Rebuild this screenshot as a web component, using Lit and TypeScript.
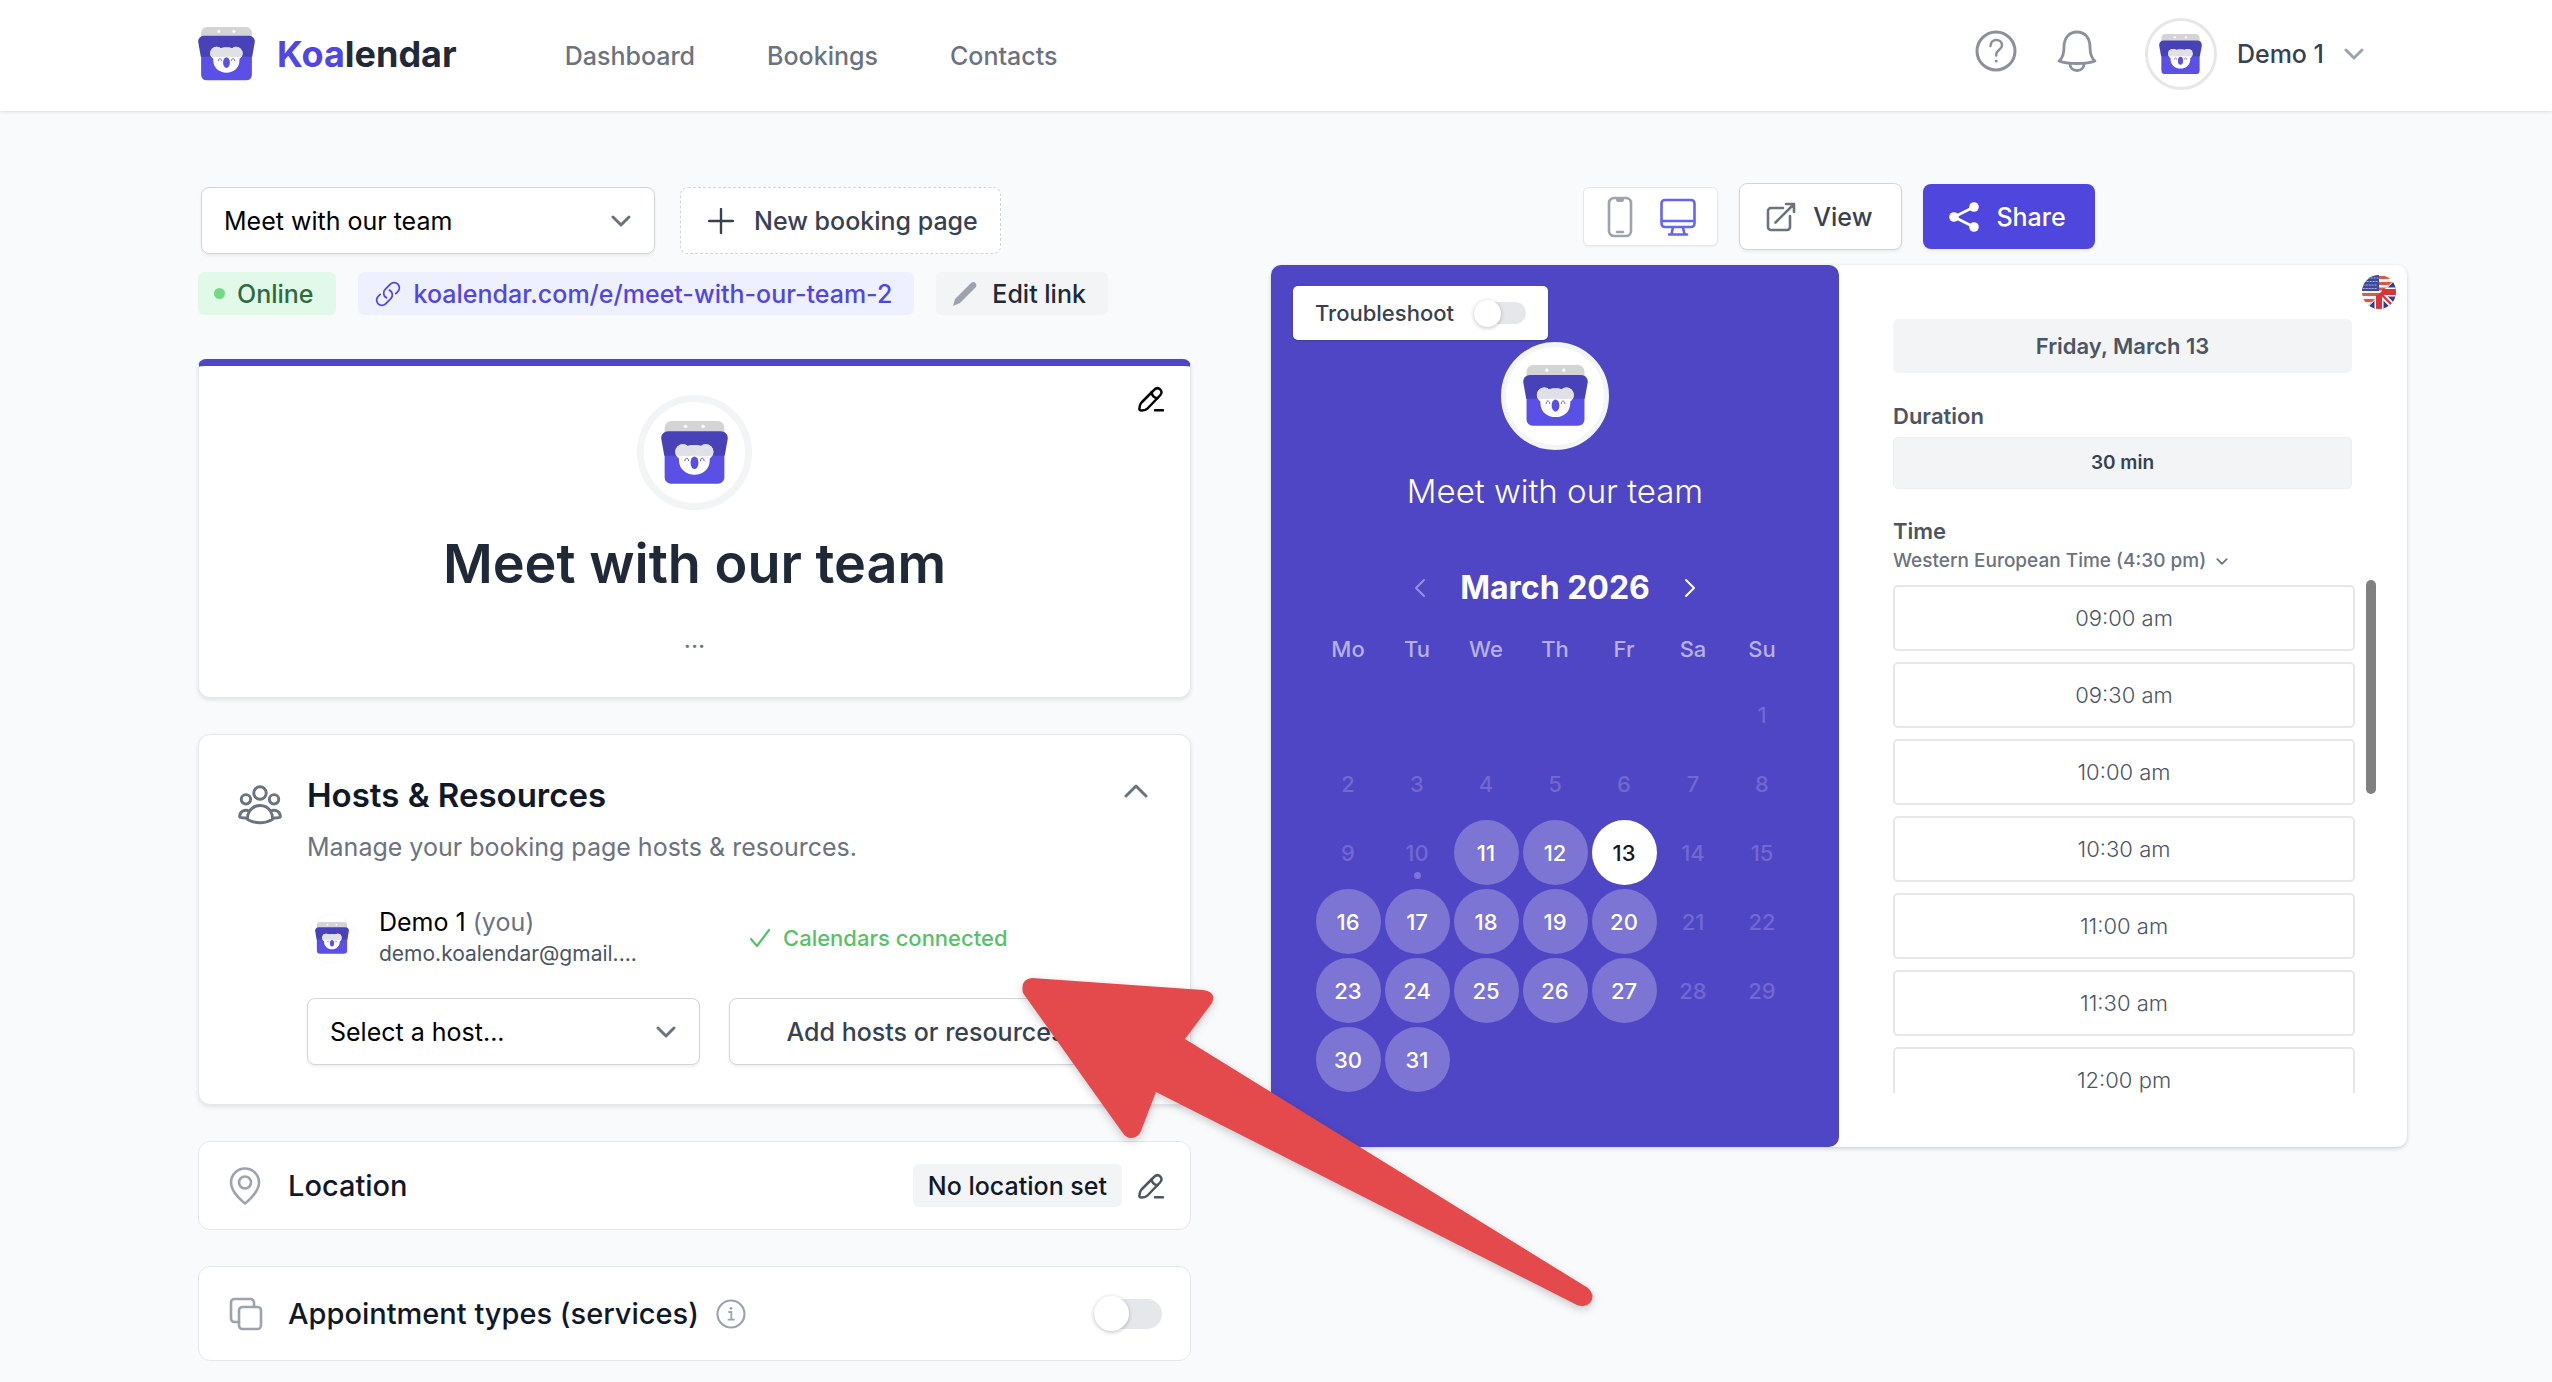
import { LitElement, html, css, svg, nothing } from "lit";
import { customElement, property, state } from "lit/decorators.js";
import { classMap } from "lit/directives/class-map.js";

/** Koala peeking out of a calendar pocket; scales with the width of its host. */
@customElement("koala-mark")
class KoalaMark extends LitElement {
  static styles = css`
    :host { display: block; }
    .mark { display: block; width: 100%; height: auto; }
  `;

  render() {
    return html`
      <svg class="mark" viewBox="0 0 202 190" aria-hidden="true">
        <defs>
          <clipPath id="upper"><rect x="0" y="60" width="202" height="45" /></clipPath>
        </defs>
        <rect x="11" y="0" width="180" height="60" rx="20" fill="#d4d4d4" />
        <circle cx="74" cy="16" r="5" fill="#fff" />
        <circle cx="127" cy="16" r="5" fill="#fff" />
        <path d="M11 90h180v80a19 19 0 0 1-19 19H30a19 19 0 0 1-19-19z" fill="#5a50e5" />
        <path d="M22 31h158c14 0 23 11 21 24l-9 50H10L1 55C-1 42 8 31 22 31z" fill="#4842b9" />
        <g fill="#fff">
          <circle cx="66" cy="93" r="23" />
          <circle cx="135" cy="93" r="23" />
          <path d="M54 96c0-15 24-23 47-23s46 8 46 23v21c0 29-21 45-46 45s-47-16-47-45z" />
        </g>
        <g fill="#dfe1e6" clip-path="url(#upper)">
          <circle cx="66" cy="93" r="23" />
          <circle cx="135" cy="93" r="23" />
          <path d="M54 96c0-15 24-23 47-23s46 8 46 23v21H54z" />
        </g>
        <ellipse cx="101" cy="126" rx="12" ry="19" fill="#5a50e5" />
        <path d="M72 121c0-12 11-12 11 0M119 121c0-12 11-12 11 0" fill="none" stroke="#5a50e5" stroke-width="3" />
      </svg>
    `;
  }
}

type IconName =
  | "help" | "bell" | "down" | "up" | "left" | "right" | "plus" | "link" | "pencil"
  | "edit" | "phone" | "monitor" | "open" | "share" | "people" | "check" | "pin"
  | "copy" | "info" | "flag";

const icons: Record<IconName, { box: string; width: number; body: unknown }> = {
  help: {
    box: "0 0 42 42", width: 42,
    body: svg`<circle cx="21" cy="21" r="19" stroke-width="3" />
      <path d="M15.500 16c0-3.500 2.500-6 5.800-6s5.700 2.200 5.700 5.200c0 4.300-5.800 4.700-5.800 9.300v1" stroke-width="2.500" />
      <circle cx="21.200" cy="31" r="1.500" fill="currentColor" stroke="none" />`,
  },
  bell: {
    box: "0 0 40 42", width: 40,
    body: svg`<path d="M2 31c4-3 5-7 5-14C7 8 12 2 20 2s13 6 13 15c0 7 1 11 5 14-5 2-11 2.500-18 2.500S7 33 2 31z" stroke-width="2.800" />
      <path d="M13 34c0 4 3 6.500 7 6.500s7-2.500 7-6.500" stroke-width="2.800" />`,
  },
  down: { box: "0 0 20 12", width: 20, body: svg`<path d="M2 2l8 8 8-8" stroke-width="3" />` },
  up: { box: "0 0 24 14", width: 24, body: svg`<path d="M2 12L12 2l10 10" stroke-width="3" />` },
  left: { box: "0 0 12 20", width: 12, body: svg`<path d="M10 2l-8 8 8 8" stroke-width="2" />` },
  right: { box: "0 0 12 20", width: 12, body: svg`<path d="M2 2l8 8-8 8" stroke-width="2" />` },
  plus: { box: "0 0 26 26", width: 26, body: svg`<path d="M13 1v24M1 13h24" stroke-width="2.400" />` },
  link: {
    box: "0 0 24 24", width: 32,
    body: svg`<path d="M13.190 8.688a4.500 4.500 0 0 1 1.242 7.244l-4.500 4.500a4.500 4.500 0 0 1-6.364-6.364l1.757-1.757m13.350-.622l1.757-1.757a4.500 4.500 0 0 0-6.364-6.364l-4.500 4.500a4.500 4.500 0 0 0 1.242 7.244" stroke-width="1.500" />`,
  },
  pencil: {
    box: "0 0 26 26", width: 26,
    body: svg`<path d="M1 25l2-7L19 2c3-3 7 1 4.500 4.500L8 22z" fill="currentColor" stroke="none" />`,
  },
  edit: {
    box: "0 0 26 26", width: 26,
    body: svg`<path d="M15.500 4.500c2-2.500 4-3.200 6.200-1.500 2.500 2 2.300 4.300.3 6.500L9.500 22.500c-1.500 1.500-3.500 2-6.500 2-1.500 0-1.800-1-1.500-3 .3-2.500.8-3.700 2-5z" stroke-width="2.500" />
      <path d="M13.500 6.500c.5 3 2.500 5.300 6 5.700M17 24.300h8" stroke-width="2.500" />`,
  },
  phone: {
    box: "0 0 26 42", width: 26,
    body: svg`<rect x="2" y="2" width="22" height="38" rx="5" stroke-width="2.600" />
      <path d="M9 2v2q0 2 2 2h4q2 0 2-2V2z" fill="currentColor" stroke="none" /><path d="M10 36h6" stroke-width="2.600" />`,
  },
  monitor: {
    box: "0 0 36 38", width: 36,
    body: svg`<rect x="1.500" y="2" width="33" height="27" rx="3.500" stroke-width="2.600" />
      <path d="M2 23h32M13 29.500l-1.500 6.500M23 29.500l1.500 6.500M9 36.500h18" stroke-width="2.600" />`,
  },
  open: {
    box: "0 0 30 30", width: 30,
    body: svg`<path d="M17 6H5a3 3 0 0 0-3 3v16a3 3 0 0 0 3 3h16a3 3 0 0 0 3-3V14M20 2h8v8M27.500 2.500L9.500 20.500" stroke-width="2.600" />`,
  },
  share: {
    box: "0 0 30 30", width: 30,
    body: svg`<path d="M25 5L5 15l20 10" stroke-width="2.600" />
      <g fill="currentColor" stroke="none"><circle cx="25" cy="5" r="4.800" /><circle cx="5" cy="15" r="4.800" /><circle cx="25" cy="25" r="4.800" /></g>`,
  },
  people: {
    box: "0 0 24 24", width: 50,
    body: svg`<path d="M18 18.720a9.094 9.094 0 0 0 3.741-.479 3 3 0 0 0-4.682-2.720m.940 3.198l.001.031c0 .225-.012.447-.037.666A11.944 11.944 0 0 1 12 21c-2.170 0-4.207-.576-5.963-1.584A6.062 6.062 0 0 1 6 18.719m12 0a5.971 5.971 0 0 0-.941-3.197m0 0A5.995 5.995 0 0 0 12 12.750a5.995 5.995 0 0 0-5.058 2.772m0 0a3 3 0 0 0-4.681 2.720 8.986 8.986 0 0 0 3.740.477m.940-3.197a5.971 5.971 0 0 0-.940 3.197M15 6.750a3 3 0 1 1-6 0 3 3 0 0 1 6 0zm6 3a2.250 2.250 0 1 1-4.500 0 2.250 2.250 0 0 1 4.500 0zm-13.500 0a2.250 2.250 0 1 1-4.500 0 2.250 2.250 0 0 1 4.500 0z" stroke-width="1.400" />`,
  },
  check: { box: "0 0 22 20", width: 22, body: svg`<path d="M2 11l6 7L20 2" stroke-width="2.200" />` },
  pin: {
    box: "0 0 32 38", width: 32,
    body: svg`<circle cx="16" cy="15.500" r="6" stroke-width="2.600" />
      <path d="M30 15.500C30 26 16 36.500 16 36.500S2 26 2 15.500a14 14 0 0 1 28 0z" stroke-width="2.600" />`,
  },
  copy: {
    box: "0 0 34 34", width: 34,
    body: svg`<rect x="10" y="10" width="22" height="22" rx="3.500" stroke-width="2.600" />
      <path d="M10 25H5.500A3.500 3.500 0 0 1 2 21.500v-16A3.500 3.500 0 0 1 5.500 2h16A3.500 3.500 0 0 1 25 5.500V10" stroke-width="2.600" />`,
  },
  info: {
    box: "0 0 30 30", width: 30,
    body: svg`<circle cx="15" cy="15" r="13.500" stroke-width="2.200" />
      <path d="M13 13h2.300v7.500M12.500 20.700h5.500" stroke-width="1.800" /><circle cx="15" cy="9.300" r="1.400" fill="currentColor" stroke="none" />`,
  },
  flag: {
    box: "0 0 34 34", width: 34,
    body: svg`<defs><clipPath id="disc"><circle cx="17" cy="17" r="17" /></clipPath><clipPath id="union"><path d="M34 3v31H3z" /></clipPath></defs>
      <g clip-path="url(#disc)" stroke="none">
        <path d="M0 0h34v34H0z" fill="#f6f2f2" />
        <path d="M0 1h34v3H0zM0 7h34v3H0zM0 12.500h34v3H0zM0 18h34v3H0zM0 24h34v3H0z" fill="#dc5a40" />
        <path d="M0 0h17v16H0z" fill="#3c4a9c" />
        <path d="M3 3h13M2 6.500h14M1 10h15M1 13.500h15" stroke="#a9b2dc" stroke-width="1.200" stroke-dasharray="1.200 1.800" />
        <g clip-path="url(#union)">
          <path d="M0 0h34v34H0z" fill="#2f3f8c" />
          <path d="M0 34L34 0M17 17l17 17" stroke="#fff" stroke-width="6" />
          <path d="M17 14v20M17 17h17" stroke="#fff" stroke-width="9" />
          <path d="M17 17L4 30M17 17l14 14" stroke="#d8343c" stroke-width="2.400" />
        </g>
        <path d="M17 20v14M20 17h14" stroke="#d8343c" stroke-width="6" stroke-linecap="butt" />
        <path d="M14 22l8-8h4v6h-6v4z" fill="#d8343c" />
      </g>`,
  },
};

@customElement("ui-icon")
class UiIcon extends LitElement {
  @property() name: IconName = "down";
  @property({ type: Number }) size = 0;

  static styles = css`
    :host { display: block; flex: none; }
    .icon { display: block; fill: none; stroke: currentColor; stroke-linecap: round; stroke-linejoin: round; }
  `;

  render() {
    const icon = icons[this.name];
    const [, , w, h] = icon.box.split(" ").map(Number);
    const width = this.size || icon.width;
    return html`<svg class="icon" viewBox=${icon.box} width=${width} height=${Math.round((width * h) / w)} aria-hidden="true">${icon.body}</svg>`;
  }
}

const weekdays = ["Mo", "Tu", "We", "Th", "Fr", "Sa", "Su"];
const weeks = [0, 1, 2, 3, 4, 5].map((w) => weekdays.map((_, d) => w * 7 + d - 5));
const isOpen = (day: number) => day > 10 && (day + 5) % 7 < 5;
const slots = ["09:00 am", "09:30 am", "10:00 am", "10:30 am", "11:00 am", "11:30 am", "12:00 pm"];

@customElement("booking-preview")
class BookingPreview extends LitElement {
  @state() private selected = 13;

  static styles = css`
    :host { display: block; font-family: inherit; }
    * { box-sizing: border-box; }
    button { font: inherit; color: inherit; background: none; border: 0; padding: 0; cursor: pointer; }
    .card { display: grid; grid-template-columns: 1fr 1fr; background: #fff; border-radius: 10px; box-shadow: 0 2px 4px rgba(0, 0, 0, 0.14), 0 0 2px rgba(0, 0, 0, 0.08); }
    .month { background: #4f46c5; border-radius: 10px; color: #fff; padding: 21px 22px; display: flex; flex-direction: column; align-items: center; }
    .trouble { align-self: flex-start; display: flex; align-items: center; gap: 20px; height: 54px; padding: 0 22px; background: #fff; border-radius: 5px; color: #374151; font-size: 22px; font-weight: 500; box-shadow: 0 1px 2px rgba(0, 0, 0, 0.2); }
    .switch { appearance: none; margin: 0; width: 52px; height: 22px; border-radius: 11px; background: #e5e7eb; display: flex; align-items: center; cursor: pointer; }
    .switch::before { content: ""; width: 27px; height: 27px; flex: none; border-radius: 50%; background: #fff; box-shadow: 0 1px 4px rgba(0, 0, 0, 0.25); }
    .switch:checked { justify-content: flex-end; background: #4f46e5; }
    .avatar { width: 108px; height: 108px; margin-top: 2px; border: 5px solid #f3f4f6; border-radius: 50%; background: #fff; display: grid; place-items: center; }
    .avatar koala-mark { width: 65px; }
    .title { margin: 21px 0 0; font-size: 33px; line-height: 40px; font-weight: 300; }
    .switcher { display: flex; align-items: center; gap: 34px; margin-top: 57px; }
    .name { margin: 0; font-size: 32px; line-height: 40px; font-weight: 700; }
    .dim { opacity: 0.4; }
    .grid { border-collapse: collapse; margin-top: 10px; font-size: 22px; font-weight: 500; }
    .grid th { width: 69px; height: 62px; padding: 0; font-weight: 500; color: #b5b1e6; }
    .grid td { width: 69px; height: 69px; padding: 0; text-align: center; }
    .day { width: 65px; height: 65px; border-radius: 50%; color: #7069d0; display: inline-grid; place-items: center; vertical-align: middle; position: relative; }
    .day.open { background: #7c75d4; color: #fff; }
    .day.chosen { background: #fff; color: #111827; }
    .day.today::after { content: ""; position: absolute; bottom: 6px; width: 7px; height: 7px; border-radius: 50%; background: #7c75d4; }
    .side { display: flex; flex-direction: column; padding: 10px 11px 54px 54px; color: #4b5563; }
    .lang { align-self: flex-end; }
    .body { display: flex; flex-direction: column; padding: 10px 44px 0 0; }
    .date, .length { display: grid; place-items: center; background: #f3f4f6; border-radius: 5px; font-weight: 600; }
    .date { height: 54px; font-size: 22px; margin: 0; }
    .label { margin: 0; font-size: 22px; line-height: 28px; font-weight: 600; }
    .duration { margin: 29px 0 7px; }
    .length { height: 52px; font-size: 19px; color: #374151; border: 1px solid #eceef1; }
    .time { margin-top: 28px; }
    .zone { align-self: flex-start; display: flex; align-items: center; gap: 10px; margin-top: 2px; font-size: 19px; line-height: 28px; font-weight: 500; color: #6b7280; }
    .scroller { display: flex; gap: 11px; height: 513px; margin-top: 5px; padding-right: 20px; }
    .times { flex: 1; overflow: hidden; margin: 0; padding: 5px 0 0; list-style: none; display: flex; flex-direction: column; gap: 11px; }
    .slot { width: 100%; height: 66px; border: 2px solid #e5e7eb; border-radius: 5px; font-size: 22px; font-weight: 300; display: block; color: #4b5563; }
    .thumb { width: 10px; height: 214px; border-radius: 5px; background: #808080; }
  `;

  private day(n: number) {
    if (n < 1 || n > 31) return nothing;
    const cls = { day: true, open: isOpen(n), chosen: n === this.selected, today: n === 10 };
    return html`<button class=${classMap(cls)} ?disabled=${!isOpen(n)} @click=${() => (this.selected = n)}>${n}</button>`;
  }

  render() {
    return html`
      <section class="card">
        <div class="month">
          <label class="trouble">Troubleshoot <input class="switch" type="checkbox" role="switch" /></label>
          <div class="avatar"><koala-mark></koala-mark></div>
          <h2 class="title">Meet with our team</h2>
          <div class="switcher">
            <button class="dim" aria-label="Previous month"><ui-icon name="left"></ui-icon></button>
            <h3 class="name">March 2026</h3>
            <button aria-label="Next month"><ui-icon name="right"></ui-icon></button>
          </div>
          <table class="grid">
            <thead><tr>${weekdays.map((d) => html`<th scope="col">${d}</th>`)}</tr></thead>
            <tbody>${weeks.map((w) => html`<tr>${w.map((n) => html`<td>${this.day(n)}</td>`)}</tr>`)}</tbody>
          </table>
        </div>
        <div class="side">
          <button class="lang" aria-label="Language"><ui-icon name="flag"></ui-icon></button>
          <div class="body">
            <p class="date">Friday, March 13</p>
            <h3 class="label duration">Duration</h3>
            <button class="length">30 min</button>
            <h3 class="label time">Time</h3>
            <button class="zone">Western European Time (4:30 pm) <ui-icon name="down" size="12"></ui-icon></button>
          </div>
          <div class="scroller">
            <ul class="times">${slots.map((s) => html`<li><button class="slot">${s}</button></li>`)}</ul>
            <div class="thumb"></div>
          </div>
        </div>
      </section>
    `;
  }
}

@customElement("app-root")
class AppRoot extends LitElement {
  static styles = css`
    :host { display: block; position: relative; min-height: 100vh; overflow: hidden; background: #f9fafc; color: #111827; font-family: Inter, "Liberation Sans", sans-serif; font-size: 25px; line-height: 32px; }
    * { box-sizing: border-box; }
    button, select { font: inherit; color: inherit; }
    button { background: none; border: 0; padding: 0; cursor: pointer; }
    a { color: inherit; text-decoration: none; }
    .top { display: flex; align-items: center; height: 111px; padding: 0 188px 3px 198px; background: #fff; box-shadow: 0 1px 3px rgba(0, 0, 0, 0.12); }
    .brand { display: flex; align-items: center; gap: 22px; font-size: 36px; line-height: 44px; font-weight: 700; color: #1f2937; }
    .brand koala-mark { width: 57px; }
    .accent { color: #4f46e5; }
    .nav { display: flex; gap: 72px; margin-left: 108px; padding-top: 3px; font-weight: 500; color: #6b7280; }
    .tools { display: flex; align-items: center; margin-left: auto; gap: 40px; color: #8b909c; }
    .tools .round { padding-bottom: 6px; }
    .account { display: flex; align-items: center; gap: 20px; margin-left: 8px; font-weight: 500; color: #374151; }
    .account ui-icon { color: #9ca3af; }
    .face { display: grid; place-items: center; flex: none; border-radius: 50%; background: #fff; }
    .face.small { width: 72px; height: 72px; border: 3px solid #e5e7eb; }
    .face.small koala-mark { width: 43px; }
    .page { display: grid; grid-template-columns: 993fr 1136fr; gap: 80px; align-items: start; padding: 72px 145px 21px 198px; }
    .stack { display: flex; flex-direction: column; gap: 36px; }
    .head { display: flex; flex-direction: column; gap: 18px; padding: 4px 0 8px; }
    .pick { display: flex; gap: 25px; padding-left: 3px; }
    .field { display: grid; align-items: center; height: 67px; color: #6b7280; }
    .field > * { grid-area: 1 / 1; }
    .field ui-icon { justify-self: end; margin-right: 24px; pointer-events: none; }
    .select { appearance: none; width: 100%; height: 100%; padding: 0 22px; color: #000; background: #fff; border: 1px solid #d1d5db; border-radius: 8px; box-shadow: 0 2px 3px rgba(0, 0, 0, 0.06); }
    .field.pages { width: 454px; }
    .new { display: flex; align-items: center; gap: 20px; height: 67px; padding: 0 22px 0 27px; background: #fff; border: 1px dashed #d1d5db; border-radius: 8px; font-weight: 500; color: #374151; }
    .chips { display: flex; gap: 22px; }
    .chip { display: flex; align-items: center; height: 43px; padding: 0 22px 0 16px; border-radius: 6px; font-weight: 500; }
    .online { gap: 12px; background: #e1f9e8; color: #2e6b40; }
    .dot { width: 11px; height: 11px; border-radius: 50%; background: #72d986; }
    .url { gap: 12px; background: #eeefff; color: #4f46e5; }
    .grey { gap: 14px; background: #f3f4f6; color: #1f2937; }
    .grey ui-icon { color: #9ca3af; }
    .card { background: #fff; border: 1px solid #e5e7eb; border-radius: 12px; }
    .raised { box-shadow: 0 2px 4px rgba(0, 0, 0, 0.1); }
    .hero { display: grid; justify-items: center; height: 339px; align-content: start; padding: 29px 26px 0; border-top: 7px solid #4f46c5; border-radius: 8px 8px 12px 12px; }
    .hero .edit { grid-area: 1 / 1; justify-self: end; align-self: start; color: #000; padding: 0; margin-top: -9px; }
    .face.large { grid-area: 1 / 1; width: 115px; height: 115px; border: 7px solid #f3f4f6; }
    .face.large koala-mark { width: 67px; }
    .title { margin: 21px 0 0; font-size: 54px; line-height: 66px; font-weight: 600; color: #1f2937; }
    .more { margin: 26px 0 0; line-height: 32px; color: #6b7280; }
    .hosts { display: flex; gap: 22px; padding: 40px 42px 39px 36px; }
    .hosts > ui-icon { color: #6b7280; padding-top: 4px; }
    .content { flex: 1; min-width: 0; }
    .bar { display: flex; justify-content: space-between; align-items: flex-start; }
    .heading { margin: 0; font-size: 33px; line-height: 40px; font-weight: 600; }
    .toggle { color: #6b7280; padding-top: 9px; }
    .note { margin: 16px 0 43px; line-height: 32px; color: #6b7280; }
    .pair { display: grid; grid-template-columns: 1fr 1fr; gap: 28px 29px; padding-right: 26px; }
    .person { display: flex; align-items: center; gap: 23px; color: #000; }
    .face.tiny { width: 49px; height: 49px; border: 1px solid #f9fafb; }
    .face.tiny koala-mark { width: 34px; }
    .muted { color: #6b7280; }
    .mail { display: block; font-size: 21px; color: #4b5563; }
    .status { display: flex; align-items: center; gap: 12px; padding-left: 20px; font-size: 22px; font-weight: 500; color: #57c168; }
    .add { height: 67px; background: #fff; border: 1px solid #d1d5db; border-radius: 8px; font-weight: 500; color: #374151; box-shadow: 0 2px 3px rgba(0, 0, 0, 0.06); }
    .row { display: flex; align-items: center; min-height: 89px; padding: 0 26px 0 30px; }
    .row.tall { min-height: 95px; }
    .row > ui-icon { color: #9ca3af; width: 34px; display: grid; justify-items: start; }
    .row > .name { margin: 0 17px 0 25px; font-size: 29px; line-height: 36px; font-weight: 500; }
    .end { margin-left: auto; display: flex; align-items: center; gap: 16px; color: #4b5563; }
    .place { padding: 0 15px; color: #111827; background: #f3f4f6; }
    .switch { appearance: none; margin: 0 2px 0 0; width: 68px; height: 30px; border-radius: 15px; background: #e5e7eb; display: flex; align-items: center; cursor: pointer; }
    .switch::before { content: ""; width: 35px; height: 35px; flex: none; border-radius: 50%; background: #fff; box-shadow: 0 1px 4px rgba(0, 0, 0, 0.25); }
    .switch:checked { justify-content: flex-end; background: #4f46e5; }
    .side { display: flex; flex-direction: column; gap: 15px; }
    .actions { display: flex; justify-content: center; align-items: center; gap: 21px; }
    .devices { display: flex; align-items: center; gap: 27px; height: 59px; padding: 0 21px 0 23px; background: #fff; border: 1px solid #e5e7eb; border-radius: 6px; color: #9ca3af; box-shadow: 0 1px 2px rgba(0, 0, 0, 0.05); }
    .devices .on { color: #6366f1; }
    .view, .share { display: flex; align-items: center; gap: 17px; padding: 0 29px 0 26px; border-radius: 8px; font-weight: 500; box-shadow: 0 2px 3px rgba(0, 0, 0, 0.06); }
    .view { height: 67px; background: #fff; border: 1px solid #d1d5db; color: #374151; }
    .view ui-icon { color: #6b7280; }
    .share { height: 65px; background: #4f46de; color: #fff; }
    .arrow { position: absolute; left: 1010px; top: 966px; width: 600px; height: 360px; pointer-events: none; filter: drop-shadow(0 3px 4px rgba(0, 0, 0, 0.2)); }
  `;

  render() {
    return html`
      <header class="top">
        <a class="brand" href="#"><koala-mark></koala-mark><span><span class="accent">Koa</span>lendar</span></a>
        <nav class="nav"><a href="#">Dashboard</a><a href="#">Bookings</a><a href="#">Contacts</a></nav>
        <div class="tools">
          <button class="round" aria-label="Help"><ui-icon name="help"></ui-icon></button>
          <button class="round" aria-label="Notifications"><ui-icon name="bell"></ui-icon></button>
          <button class="account">
            <span class="face small"><koala-mark></koala-mark></span>Demo 1<ui-icon name="down"></ui-icon>
          </button>
        </div>
      </header>

      <main class="page">
        <div class="stack">
          <div class="head">
            <div class="pick">
              <div class="field pages">
                <select class="select" aria-label="Booking page"><option>Meet with our team</option></select>
                <ui-icon name="down"></ui-icon>
              </div>
              <button class="new"><ui-icon name="plus"></ui-icon>New booking page</button>
            </div>
            <div class="chips">
              <span class="chip online"><span class="dot"></span>Online</span>
              <a class="chip url" href="#"><ui-icon name="link" size="28"></ui-icon>koalendar.com/e/meet-with-our-team-2</a>
              <button class="chip grey"><ui-icon name="pencil"></ui-icon>Edit link</button>
            </div>
          </div>

          <section class="card raised hero">
            <div class="face large"><koala-mark></koala-mark></div>
            <button class="edit" aria-label="Edit page"><ui-icon name="edit"></ui-icon></button>
            <h1 class="title">Meet with our team</h1>
            <p class="more">...</p>
          </section>

          <section class="card raised hosts">
            <ui-icon name="people"></ui-icon>
            <div class="content">
              <div class="bar">
                <h2 class="heading">Hosts &amp; Resources</h2>
                <button class="toggle" aria-label="Collapse"><ui-icon name="up"></ui-icon></button>
              </div>
              <p class="note">Manage your booking page hosts &amp; resources.</p>
              <div class="pair">
                <div class="person">
                  <span class="face tiny"><koala-mark></koala-mark></span>
                  <span>Demo 1 <span class="muted">(you)</span><span class="mail">demo.koalendar@gmail....</span></span>
                </div>
                <div class="status"><ui-icon name="check"></ui-icon>Calendars connected</div>
                <div class="field">
                  <select class="select" aria-label="Host"><option>Select a host...</option></select>
                  <ui-icon name="down"></ui-icon>
                </div>
                <button class="add">Add hosts or resources</button>
              </div>
            </div>
          </section>

          <section class="card row">
            <ui-icon name="pin"></ui-icon>
            <h2 class="name">Location</h2>
            <div class="end">
              <span class="chip place">No location set</span>
              <button aria-label="Edit location"><ui-icon name="edit"></ui-icon></button>
            </div>
          </section>

          <section class="card row tall">
            <ui-icon name="copy"></ui-icon>
            <h2 class="name">Appointment types (services)</h2>
            <ui-icon name="info"></ui-icon>
            <div class="end"><input class="switch" type="checkbox" role="switch" aria-label="Appointment types" /></div>
          </section>
        </div>

        <div class="side">
          <div class="actions">
            <div class="devices">
              <button aria-label="Mobile preview"><ui-icon name="phone"></ui-icon></button>
              <button class="on" aria-label="Desktop preview"><ui-icon name="monitor"></ui-icon></button>
            </div>
            <button class="view"><ui-icon name="open"></ui-icon>View</button>
            <button class="share"><ui-icon name="share"></ui-icon>Share</button>
          </div>
          <booking-preview></booking-preview>
        </div>
      </main>

      <svg class="arrow" viewBox="1010 966 600 360" aria-hidden="true">
        <path
          d="M1032 978L1203 990Q1217 992 1212 1003L1185 1039L1588 1288Q1596 1296 1590 1303Q1585 1308 1577 1305L1156 1092L1141 1131Q1138 1138 1131 1138Q1126 1138 1122 1132L1023 993Q1020 979 1032 978Z"
          fill="#e4494b"
        />
      </svg>
    `;
  }
}
